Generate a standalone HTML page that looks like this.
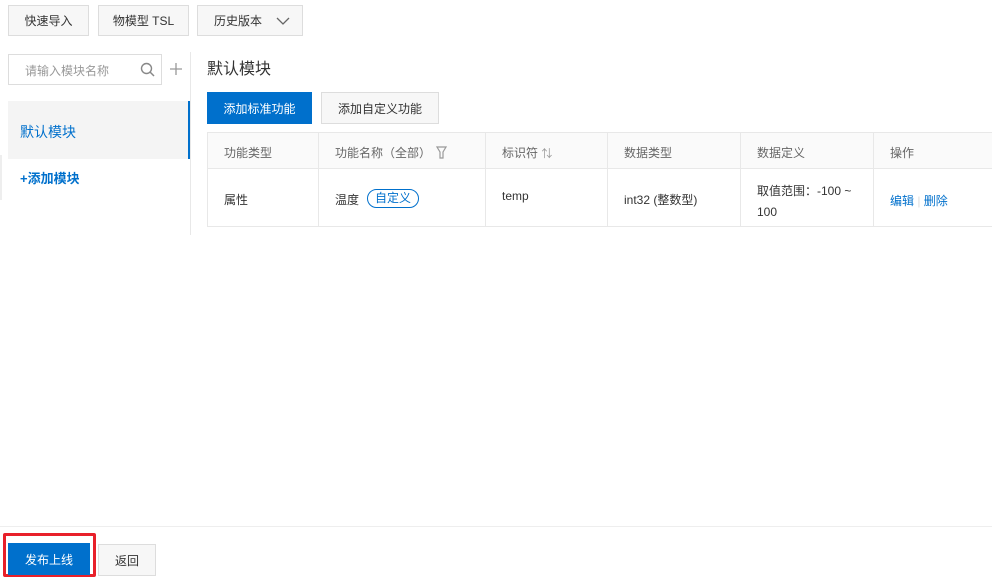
<!DOCTYPE html>
<html><head><meta charset="utf-8"><style>
*{box-sizing:border-box;margin:0;padding:0}
body{width:992px;height:578px;overflow:hidden;background:#fff;font-family:"Liberation Sans","Noto Sans CJK SC",sans-serif;font-size:12px;color:#333;position:relative}
.a{position:absolute}
.btn{position:absolute;border:1px solid #ddd;background:#f7f7f7;display:flex;align-items:center;justify-content:center;font-size:12px;color:#333}
.blue{background:#0070cc;border-color:#0070cc;color:#fff}
.t{position:absolute;font-size:12px}
.vl{position:absolute;width:1px;background:#e8e8e8}
</style></head><body>
<div class="btn" style="left:8px;top:5px;width:81px;height:31px">快速导入</div>
<div class="btn" style="left:98px;top:5px;width:91px;height:31px">物模型 TSL</div>
<div class="btn" style="left:197px;top:5px;width:106px;height:31px;justify-content:flex-start;padding-left:16px">历史版本
<svg style="margin-left:14px" width="14" height="8" viewBox="0 0 14 8"><path d="M1 1l6 6 6-6" fill="none" stroke="#666" stroke-width="1.3"/></svg></div>

<div class="a" style="left:8px;top:54px;width:154px;height:31px;border:1px solid #ddd"></div>
<div class="t" style="left:25px;top:62px;color:#999;font-size:12px">请输入模块名称</div>
<svg class="a" style="left:140px;top:62px" width="15" height="15" viewBox="0 0 15 15"><circle cx="6.5" cy="6.5" r="5" fill="none" stroke="#888" stroke-width="1.4"/><path d="M10 10l4 4" stroke="#888" stroke-width="1.5"/></svg>
<svg class="a" style="left:169px;top:62px" width="14" height="14" viewBox="0 0 14 14"><path d="M7 1v12M1 7h12" stroke="#999" stroke-width="1.3"/></svg>
<div class="vl" style="left:190px;top:52px;height:183px"></div>
<div class="a" style="left:8px;top:101px;width:182px;height:58px;background:#f4f4f4;border-right:2px solid #0070cc"></div>
<div class="t" style="left:20px;top:122px;color:#0070cc;font-size:14px">默认模块</div>
<div class="t" style="left:20px;top:168px;color:#0070cc;font-size:13px;font-weight:bold">+添加模块</div>
<div class="a" style="left:0;top:155px;width:2px;height:45px;background:#eee"></div>

<div class="t" style="left:207px;top:55px;font-size:16px;color:#333">默认模块</div>
<div class="btn blue" style="left:207px;top:92px;width:105px;height:32px">添加标准功能</div>
<div class="btn" style="left:321px;top:92px;width:118px;height:32px">添加自定义功能</div>

<div class="a" style="left:207px;top:132px;width:800px;height:95px;border:1px solid #e8e8e8"></div>
<div class="a" style="left:208px;top:133px;width:784px;height:36px;background:#fafafa;border-bottom:1px solid #e8e8e8"></div>
<div class="vl" style="left:318px;top:132px;height:95px"></div>
<div class="vl" style="left:485px;top:132px;height:95px"></div>
<div class="vl" style="left:607px;top:132px;height:95px"></div>
<div class="vl" style="left:740px;top:132px;height:95px"></div>
<div class="vl" style="left:873px;top:132px;height:95px"></div>

<div class="t" style="left:224px;top:144px;color:#666">功能类型</div>
<div class="t" style="left:335px;top:144px;color:#666">功能名称（全部）</div>
<svg class="a" style="left:436px;top:146px" width="11" height="13" viewBox="0 0 11 13"><path d="M1 1h9L7 6v6H4V6z" fill="none" stroke="#999" stroke-width="1.2"/></svg>
<div class="t" style="left:502px;top:144px;color:#666">标识符 <span style="color:#999;font-size:11px">⇅</span></div>
<div class="t" style="left:624px;top:144px;color:#666">数据类型</div>
<div class="t" style="left:757px;top:144px;color:#666">数据定义</div>
<div class="t" style="left:890px;top:144px;color:#666">操作</div>

<div class="t" style="left:224px;top:191px">属性</div>
<div class="t" style="left:335px;top:191px">温度</div>
<div class="a" style="left:367px;top:189px;width:52px;height:19px;border:1px solid #0070cc;border-radius:10px;color:#0070cc;font-size:12px;text-align:center;line-height:17px">自定义</div>
<div class="t" style="left:502px;top:189px">temp</div>
<div class="t" style="left:624px;top:191px">int32 (整数型)</div>
<div class="t" style="left:757px;top:181px;line-height:21px">取值范围：-100 ~<br>100</div>
<div class="t" style="left:890px;top:192px;color:#0070cc">编辑 <span style="color:#ddd">|</span> 删除</div>

<div class="a" style="left:0;top:526px;width:992px;height:1px;background:#eee"></div>
<div class="a" style="left:3px;top:533px;width:93px;height:44px;border:3px solid #e8202a;border-radius:2px"></div>
<div class="btn blue" style="left:8px;top:543px;width:82px;height:32px">发布上线</div>
<div class="btn" style="left:98px;top:544px;width:58px;height:32px">返回</div>
</body></html>
